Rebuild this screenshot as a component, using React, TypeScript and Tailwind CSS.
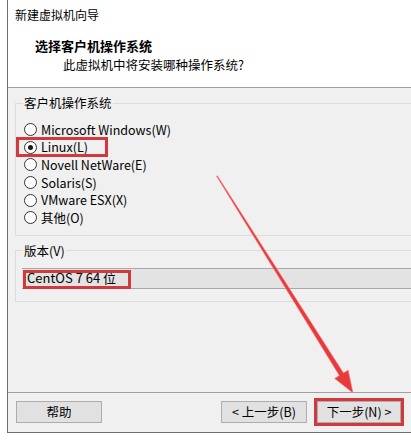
const font = { fontFamily: '"Noto Sans CJK SC", "Noto Sans", sans-serif' };

const systems = [
  'Microsoft Windows(W)',
  'Linux(L)',
  'Novell NetWare(E)',
  'Solaris(S)',
  'VMware ESX(X)',
  '其他(O)',
];

function Radio({ checked }: { checked?: boolean }) {
  return (
    <span className="w-[13px] h-[13px] rounded-full border border-[#333] bg-white flex items-center justify-center shrink-0">
      {checked && <span className="w-[5px] h-[5px] rounded-full bg-[#1a1a1a]" />}
    </span>
  );
}

function Button({ label }: { label: string }) {
  return (
    <div className="h-[22px] bg-[#e1e1e1] border border-[#adadad] flex items-center justify-center text-[12.5px] text-black">
      {label}
    </div>
  );
}

function Arrow() {
  return (
    <svg className="absolute inset-0 pointer-events-none" width="411" height="440" viewBox="0 0 411 440">
      <polygon
        points="216.6,176.3 339.3,375.6 334.6,378.5 353,393 348.2,370.1 343.5,373 217.4,175.7"
        fill="#e8393b"
        stroke="#f28a8a"
        strokeWidth="0.6"
      />
    </svg>
  );
}

export default function App() {
  return (
    <div className="relative w-[411px] h-[440px] bg-white overflow-hidden" style={font}>
      <div className="ml-[7px] w-[420px] h-[433px] border-l border-b border-[#6e6e6e] bg-[#f0f0f0] flex flex-col">
        <div className="h-[88px] bg-white border-b border-[#a0a0a0] text-black">
          <div className="pt-[7px] pl-[7px] text-[12px] leading-[16px]">新建虚拟机向导</div>
          <div className="mt-[14px] pl-[27px] text-[13px] leading-[18px] font-bold">选择客户机操作系统</div>
          <div className="mt-[2.5px] pl-[55px] text-[12.5px] leading-[14px]">此虚拟机中将安装哪种操作系统?</div>
        </div>

        <fieldset className="mt-[7px] ml-[7px] border border-[#dcdcdc] pb-[8px] text-[12.5px] text-black">
          <legend className="ml-[7px] px-[1px] leading-[16px]">客户机操作系统</legend>
          <div className="pt-[10px]">
            {systems.map((s, i) => (
              <div key={s} className="relative h-[17.6px] flex items-center gap-[4px] pl-[8px]">
                <Radio checked={i === 1} />
                <span className="leading-[16px]">{s}</span>
                {i === 1 && (
                  <span className="absolute left-0 -top-[2px] w-[92px] h-[20px] border-[3px] border-[#d2393e]" />
                )}
              </div>
            ))}
          </div>
        </fieldset>

        <fieldset className="mt-[7px] ml-[7px] border border-[#dcdcdc] pl-[6px] pb-[12px] text-[12.5px] text-black">
          <legend className="ml-[1px] px-[1px] leading-[16px]">版本(V)</legend>
          <div className="relative mt-[9px] h-[21px] bg-[#e3e3e3] border-y border-[#a8a8a8] flex items-center pl-[5px]">
            <span className="leading-[16px] text-[13px]">CentOS 7 64 位</span>
            <span className="absolute left-[1px] top-[1px] w-[108px] h-[19px] border-[3px] border-[#d2393e]" />
          </div>
        </fieldset>

        <div className="mt-auto h-[40px] border-t border-[#a0a0a0] flex items-start pt-[8px]">
          <div className="ml-[8px] w-[86px]">
            <Button label="帮助" />
          </div>
          <div className="ml-[119px] w-[86px]">
            <Button label="< 上一步(B)" />
          </div>
          <div className="ml-[7px] -mt-[3px] border-[3px] border-[#d2393e]">
            <div className="w-[84px]">
              <Button label="下一步(N) >" />
            </div>
          </div>
        </div>
      </div>
      <Arrow />
    </div>
  );
}
